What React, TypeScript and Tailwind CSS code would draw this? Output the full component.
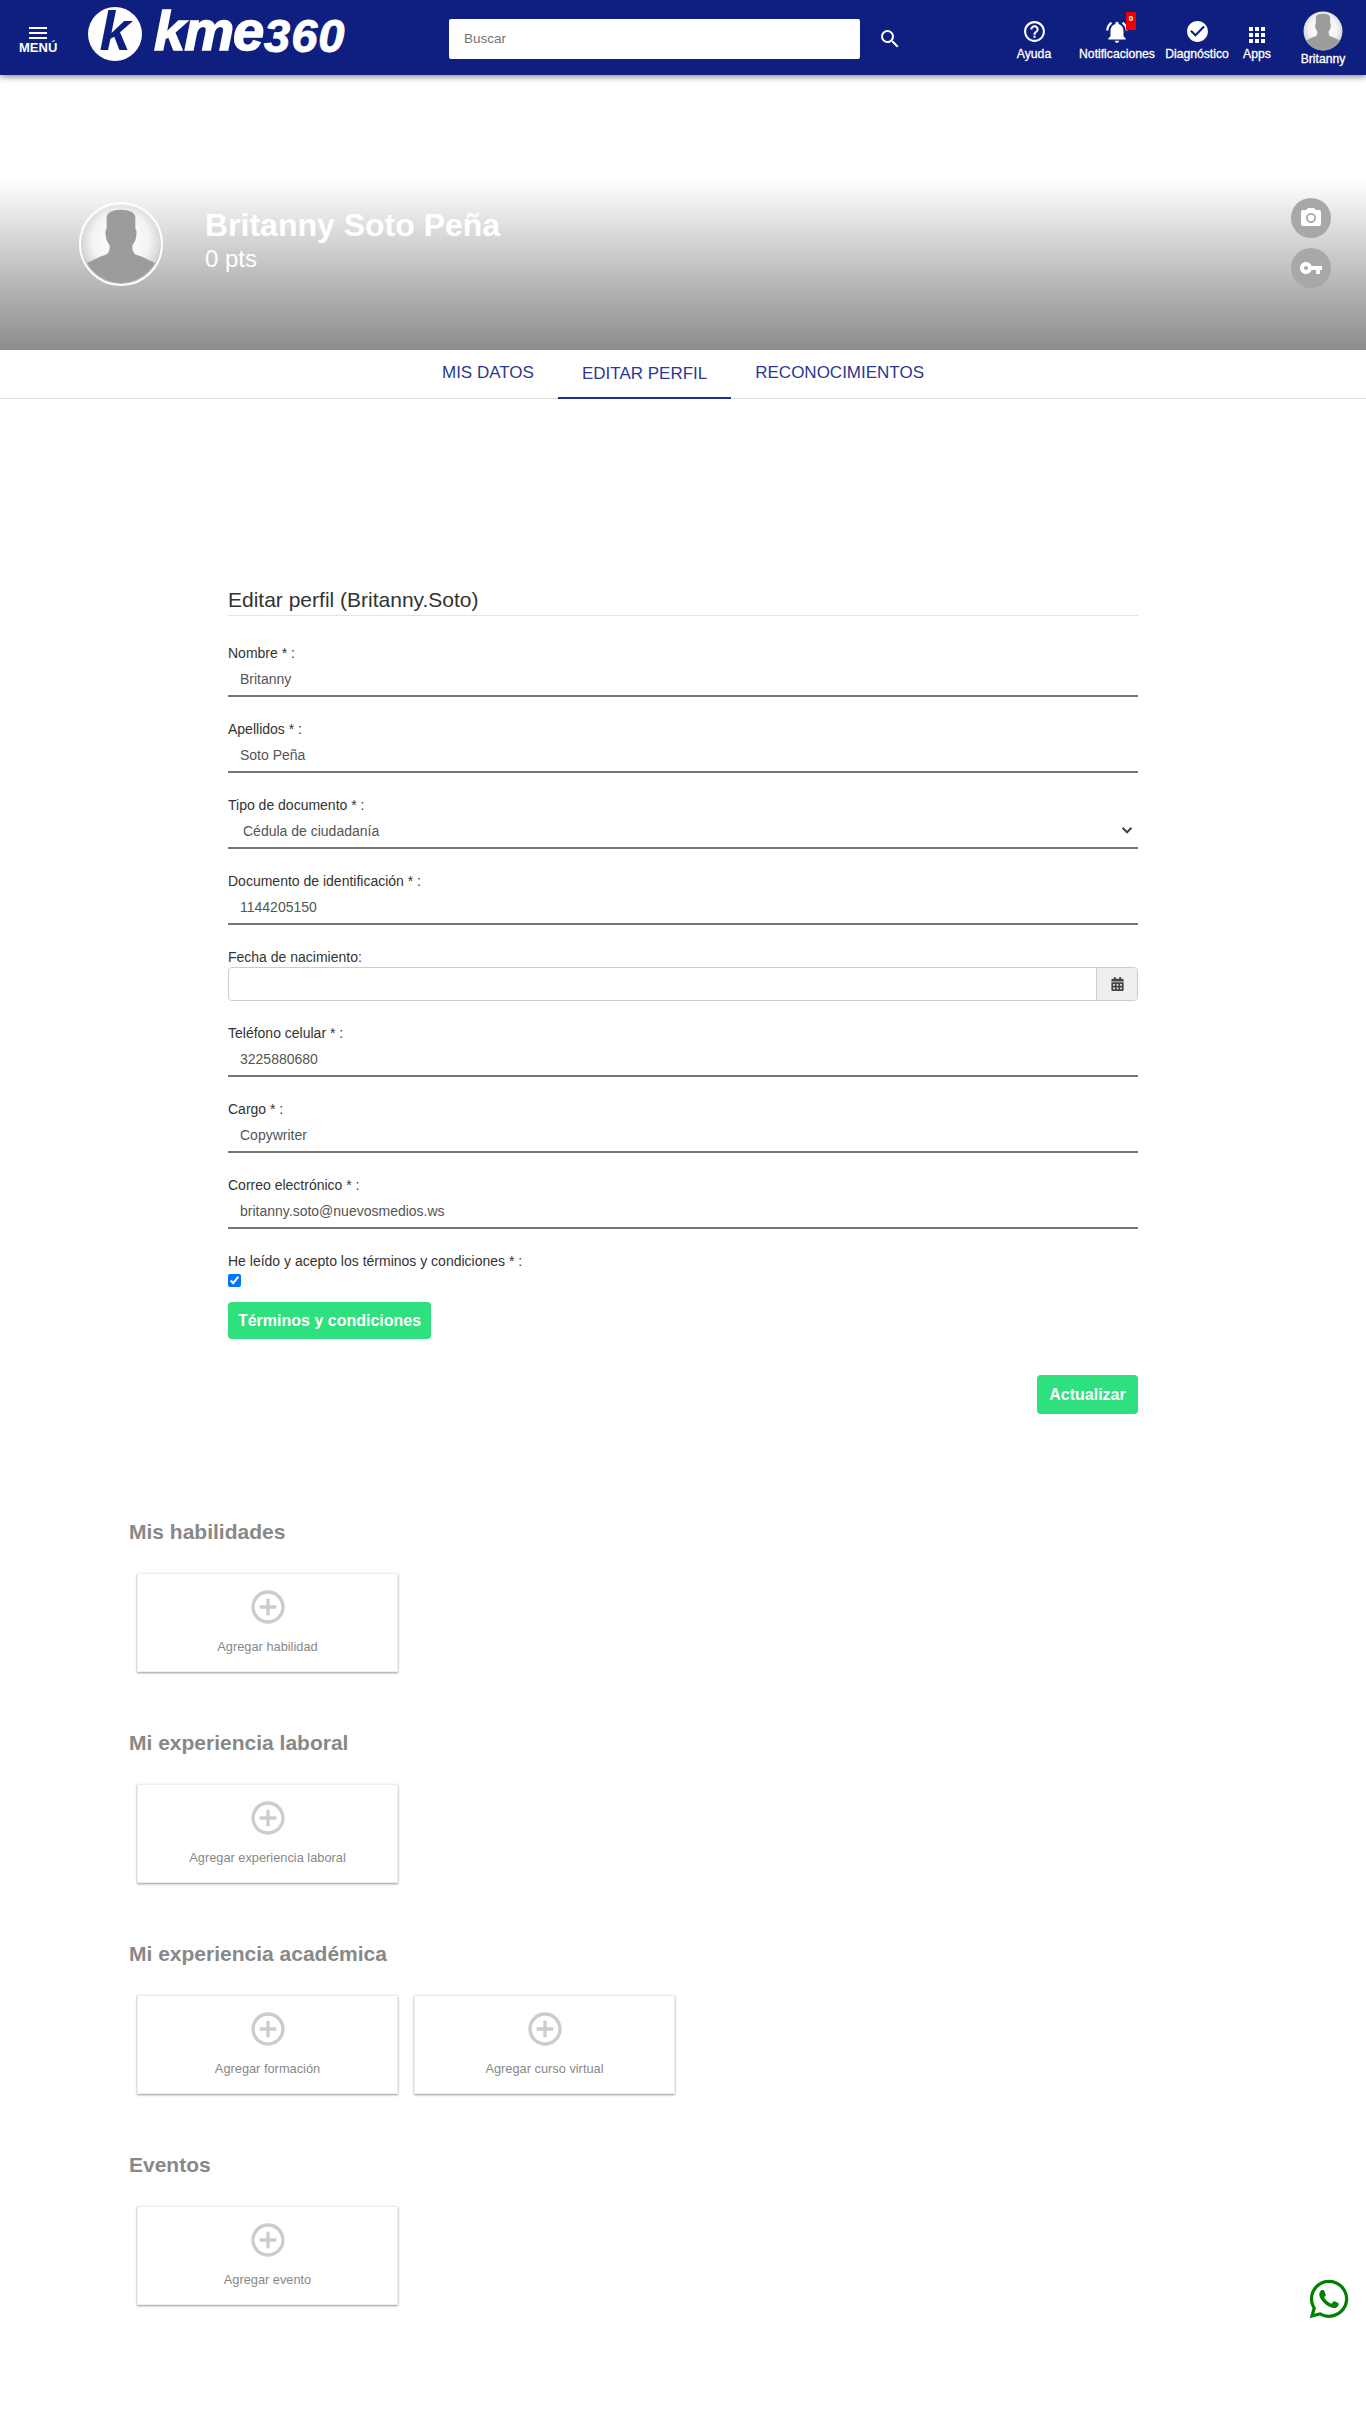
import React from 'react'
import {
  MdMenu,
  MdSearch,
  MdHelpOutline,
  MdNotificationsActive,
  MdCheckCircle,
  MdApps,
  MdPhotoCamera,
  MdVpnKey,
  MdAddCircleOutline,
} from 'react-icons/md'
import { FaWhatsapp, FaCalendarAlt } from 'react-icons/fa'

const sans = "font-['Liberation_Sans',Arial,sans-serif]"

const Avatar = ({ className }: { className: string }) => (
  <svg viewBox="0 0 78 84" className={className} preserveAspectRatio="none">
    <defs>
      <radialGradient id="av" cx="50%" cy="45%" r="60%">
        <stop offset="0%" stopColor="#ffffff" />
        <stop offset="60%" stopColor="#f4f4f4" />
        <stop offset="100%" stopColor="#c4c4c4" />
      </radialGradient>
      <clipPath id="avc">
        <ellipse cx="39" cy="42" rx="38" ry="41" />
      </clipPath>
    </defs>
    <ellipse cx="39" cy="42" rx="38" ry="41" fill="url(#av)" />
    <path
      clipPath="url(#avc)"
      fill="#9c9c9c"
      d="M25 14c0-5 6-8 14-8s14 3 14 8v12c2 2 1 8 0 12-1 3-3 4-3 7 0 4 1 6 3 8l6 2 17 9v24H2V64l17-9 6-2c2-2 3-4 3-8 0-3-2-4-3-7-1-4-2-10 0-12z"
    />
  </svg>
)

const NavItem = ({ icon, label, className }: { icon: React.ReactNode; label: string; className: string }) => (
  <div className={`relative flex flex-col items-center ${className}`}>
    <div className="h-[31px] flex items-center justify-center">{icon}</div>
    <span className="text-[12.2px] [-webkit-text-stroke:0.3px_white] leading-[14px] whitespace-nowrap">{label}</span>
  </div>
)

const Header = () => (
  <header className="h-[75px] bg-[#0f1f7f] text-white flex items-center shadow-[0_2px_6px_rgba(0,0,0,0.45)] relative z-10">
    <div className="w-[88px] pl-[19px] flex flex-col items-start">
      <MdMenu className="w-[24px] h-[24px] -mb-[4px] ml-[7px]" />
      <span className="text-[13px] font-bold leading-[14px]">MENÚ</span>
    </div>
    <div className="w-[361px] flex items-center h-full -mt-[8px]">
      <div className="w-[54px] h-[54px] rounded-full bg-white flex items-center justify-center">
        <span className="text-[#0f1f7f] text-[56px] font-bold italic leading-none -mt-[6px]">k</span>
      </div>
      <span className="text-[56px] font-bold italic leading-none ml-[12px] tracking-[-1px] -mt-[6px] [-webkit-text-stroke:1.5px_white]">kme</span>
      <span className="text-[47px] font-bold italic leading-none mt-[4px] ml-[1px] tracking-[1px] [-webkit-text-stroke:1px_white]">360</span>
    </div>
    <input
      placeholder="Buscar"
      className="w-[411px] h-[40px] mt-[2px] bg-white rounded-[2px] px-[15px] text-[13.5px] text-[#333] placeholder:text-[#757575] outline-none"
    />
    <MdSearch className="w-[24px] h-[24px] ml-[18px] mt-[2px]" />
    <div className="ml-auto flex items-start h-full pt-[16px] pr-[13px]">
      <NavItem className="w-[60px]" label="Ayuda" icon={<MdHelpOutline className="w-[25px] h-[25px]" />} />
      <NavItem
        className="w-[80px] ml-[13px]"
        label="Notificaciones"
        icon={
          <>
            <MdNotificationsActive className="w-[26px] h-[26px]" />
            <span className="absolute left-[49px] -top-[4px] w-[10px] h-[18px] bg-[#f00000] text-[8px] font-bold leading-[14px] text-center">0</span>
          </>
        }
      />
      <NavItem className="w-[66px] ml-[7px]" label="Diagnóstico" icon={<MdCheckCircle className="w-[25px] h-[25px]" />} />
      <NavItem className="w-[34px] ml-[10px]" label="Apps" icon={<MdApps className="w-[24px] h-[24px] mt-[6px]" />} />
      <div className="w-[60px] ml-[19px] -mt-[5px] flex flex-col items-center">
        <Avatar className="w-[40px] h-[40px]" />
        <span className="text-[12.2px] [-webkit-text-stroke:0.3px_white] leading-[14px] mt-[1px]">Britanny</span>
      </div>
    </div>
  </header>
)

const Hero = () => (
  <section className="mt-[105px] h-[170px] bg-gradient-to-b from-white to-[#8c8c8c] flex pl-[79px] pt-[22px] relative">
    <div className="w-[84px] h-[84px] rounded-full border-2 border-white overflow-hidden shrink-0">
      <Avatar className="w-full h-full" />
    </div>
    <div className="ml-[42px] mt-[6px] text-white">
      <h1 className="text-[32px] font-bold leading-[34px]">Britanny Soto Peña</h1>
      <p className="text-[24px] leading-[28px] mt-[3px]">0 pts</p>
    </div>
    <div className="absolute right-[35px] top-[18px] flex flex-col gap-[10px] text-white">
      <div className="w-[40px] h-[40px] rounded-full bg-[#a8a8a8] flex items-center justify-center">
        <MdPhotoCamera className="w-[24px] h-[24px]" />
      </div>
      <div className="w-[40px] h-[40px] rounded-full bg-[#a8a8a8] flex items-center justify-center">
        <MdVpnKey className="w-[24px] h-[24px]" />
      </div>
    </div>
  </section>
)

const Tabs = () => (
  <nav className="h-[49px] border-b border-[#dedede] flex justify-center text-[17px] text-[#2b3990]">
    <div className="px-[24px] h-[49px] flex items-center -mt-[2px]">MIS DATOS</div>
    <div className="px-[24px] h-[49px] flex items-center border-b-2 border-[#232f8e]">EDITAR PERFIL</div>
    <div className="px-[24px] h-[49px] flex items-center -mt-[2px]">RECONOCIMIENTOS</div>
  </nav>
)

const Field = ({ label, value }: { label: string; value: string }) => (
  <div className="h-[76px] pt-[28px]">
    <label className="block text-[14px] leading-[20px] text-[#333]">{label}</label>
    <input
      readOnly
      value={value}
      className="block w-full h-[34px] px-[12px] text-[14px] text-[#555] border-b-2 border-[#757575] outline-none"
    />
  </div>
)

const EditForm = () => (
  <form className="ml-[228px] w-[910px] mt-[189px]">
    <h2 className="text-[21px] leading-[24px] text-[#333] pb-[3px] border-b border-[#e5e5e5]">Editar perfil (Britanny.Soto)</h2>
    <div className="mt-[-1px]">
      <Field label="Nombre * :" value="Britanny" />
      <Field label="Apellidos * :" value="Soto Peña" />
      <div className="h-[76px] pt-[28px]">
        <label className="block text-[14px] leading-[20px] text-[#333]">Tipo de documento * :</label>
        <div className="relative">
          <select className="block w-full h-[34px] px-[15px] text-[14px] text-[#555] border-b-2 border-[#757575] appearance-none outline-none bg-white">
            <option>Cédula de ciudadanía</option>
          </select>
          <svg viewBox="0 0 16 16" className="absolute right-[5px] top-[9px] w-[12px] h-[12px] pointer-events-none">
            <path d="M2 5l6 6 6-6" fill="none" stroke="#444" strokeWidth="2.6" />
          </svg>
        </div>
      </div>
      <Field label="Documento de identificación * :" value="1144205150" />
      <div className="h-[76px] pt-[28px]">
        <label className="block text-[14px] leading-[20px] text-[#333]">Fecha de nacimiento:</label>
        <div className="flex h-[34px] border border-[#ccc] rounded-[4px]">
          <input className="flex-1 outline-none rounded-l-[4px]" />
          <div className="w-[41px] bg-[#eee] border-l border-[#ccc] rounded-r-[4px] flex items-center justify-center">
            <FaCalendarAlt className="w-[13px] h-[14px] text-[#444]" />
          </div>
        </div>
      </div>
      <Field label="Teléfono celular * :" value="3225880680" />
      <Field label="Cargo * :" value="Copywriter" />
      <Field label="Correo electrónico * :" value="britanny.soto@nuevosmedios.ws" />
    </div>
    <label className="block text-[14px] leading-[20px] text-[#333] mt-[28px]">He leído y acepto los términos y condiciones * :</label>
    <input type="checkbox" checked readOnly className="block w-[13px] h-[13px] mt-[3px]" />
    <button type="button" className="block mt-[15px] h-[37px] w-[203px] rounded-[4px] bg-[#2ee07e] text-white text-[16px] font-bold">
      Términos y condiciones
    </button>
    <div className="flex justify-end mt-[36px]">
      <button type="button" className="h-[39px] w-[101px] rounded-[4px] bg-[#2ee07e] text-white text-[16px] font-bold">
        Actualizar
      </button>
    </div>
  </form>
)

const AddCard = ({ label }: { label: string }) => (
  <div className="w-[261px] h-[99px] bg-white border border-[#eeeeee] shadow-[0_1px_2px_rgba(0,0,0,0.4)] flex flex-col items-center pt-[13px]">
    <MdAddCircleOutline className="w-[40px] h-[40px] text-[#cccccc]" />
    <span className="text-[12.8px] text-[#888] leading-[16px] mt-[12px]">{label}</span>
  </div>
)

const Section = ({ title, cards }: { title: string; cards: string[] }) => (
  <section className="h-[211px] pl-[129px]">
    <h3 className="text-[21px] font-bold leading-[24px] text-[#888]">{title}</h3>
    <div className="flex gap-[16px] mt-[29px] ml-[8px]">
      {cards.map((c) => (
        <AddCard key={c} label={c} />
      ))}
    </div>
  </section>
)

export default function App() {
  return (
    <div className={`${sans} relative bg-white min-h-[2413px] w-full overflow-hidden`}>
      <Header />
      <Hero />
      <Tabs />
      <EditForm />
      <div className="mt-[106px]">
        <Section title="Mis habilidades" cards={['Agregar habilidad']} />
        <Section title="Mi experiencia laboral" cards={['Agregar experiencia laboral']} />
        <Section title="Mi experiencia académica" cards={['Agregar formación', 'Agregar curso virtual']} />
        <Section title="Eventos" cards={['Agregar evento']} />
      </div>
      <FaWhatsapp className="absolute left-[1307px] top-[2277px] w-[44px] h-[44px] text-[#008000]" />
    </div>
  )
}
